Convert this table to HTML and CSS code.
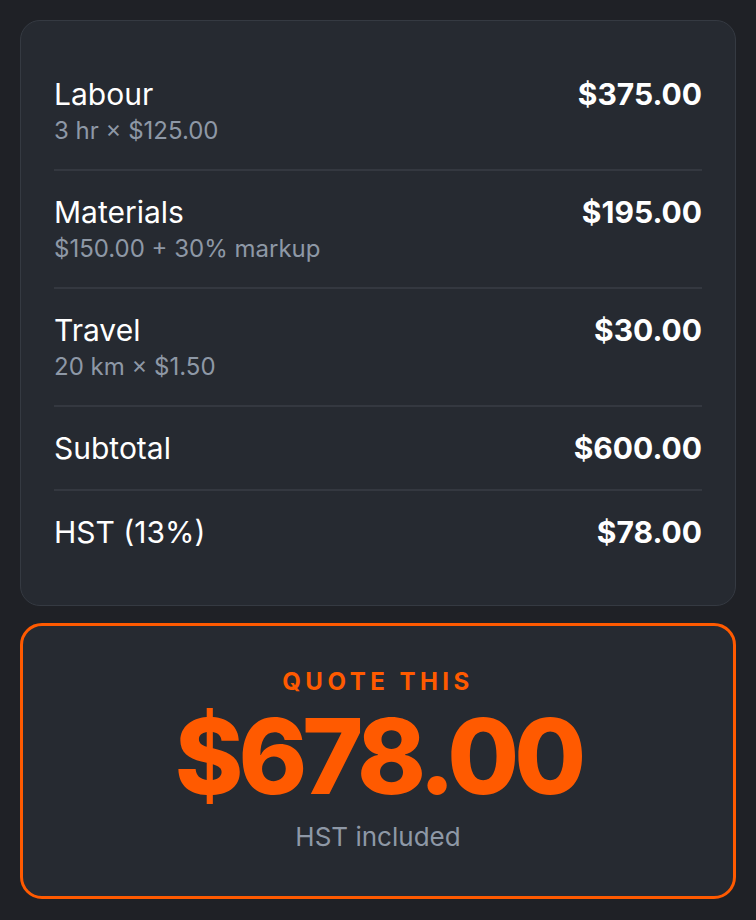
FILE: index.html
```html
<!DOCTYPE html>
<html lang="en">
<head>
    <meta charset="UTF-8">
    <meta name="viewport" content="width=device-width, initial-scale=1.0">
    <title>Quote</title>
    <link rel="stylesheet" href="styles.css">
</head>
<body>
    <div class="breakdown">
        <div class="line">
            <div class="line-info">
                <div class="line-label">Labour</div>
                <div class="line-detail">3 hr × $125.00</div>
            </div>
            <div class="line-amount">$375.00</div>
        </div>
        <div class="line">
            <div class="line-info">
                <div class="line-label">Materials</div>
                <div class="line-detail">$150.00 + 30% markup</div>
            </div>
            <div class="line-amount">$195.00</div>
        </div>
        <div class="line">
            <div class="line-info">
                <div class="line-label">Travel</div>
                <div class="line-detail">20 km × $1.50</div>
            </div>
            <div class="line-amount">$30.00</div>
        </div>
        <div class="line">
            <div class="line-info">
                <div class="line-label">Subtotal</div>
            </div>
            <div class="line-amount">$600.00</div>
        </div>
        <div class="line">
            <div class="line-info">
                <div class="line-label">HST (13%)</div>
            </div>
            <div class="line-amount">$78.00</div>
        </div>
    </div>

    <div class="total">
        <div class="total-label">Quote this</div>
        <div class="total-amount">$678.00</div>
        <div class="total-note">HST included</div>
    </div>
</body>
</html>
```

FILE: styles.css
```css
* {
    margin: 0;
    padding: 0;
    box-sizing: border-box;
}

body {
    font-family: 'Inter', 'Noto Sans', sans-serif;
    background-color: #1f2126;
    color: white;
    padding: 20px;
    display: flex;
    flex-direction: column;
    gap: 17px;
}

.breakdown {
    background-color: #262a31;
    border: 1px solid #353a42;
    border-radius: 20px;
    padding: 32px 33px;
}

.line {
    display: flex;
    justify-content: space-between;
    align-items: flex-start;
    padding: 23px 0;
    border-bottom: 2px solid #343840;
}

.line:last-child {
    border-bottom: none;
}

.line-label {
    font-size: 30px;
    line-height: 36px;
}

.line-detail {
    font-size: 24px;
    line-height: 30px;
    margin-top: 4px;
    color: #8e98a6;
}

.line-amount {
    font-size: 30px;
    line-height: 36px;
    font-weight: 700;
}

.total {
    background-color: #262a31;
    border: 3px solid #ff5a00;
    border-radius: 22px;
    padding: 42px 20px 43px;
    text-align: center;
}

.total-label {
    color: #ff5a00;
    font-size: 24px;
    font-weight: 700;
    letter-spacing: 4.5px;
    text-transform: uppercase;
    line-height: 28px;
}

.total-amount {
    color: #ff5a00;
    font-size: 104px;
    font-weight: 800;
    letter-spacing: -5px;
    line-height: 110px;
    margin-top: 5px;
}

.total-note {
    color: #8e98a6;
    font-size: 26px;
    line-height: 32px;
    margin-top: 10px;
}
```
